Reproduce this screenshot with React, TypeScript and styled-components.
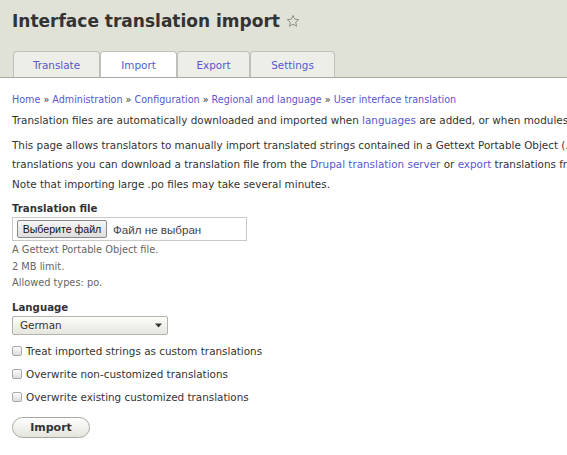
import styled, { createGlobalStyle } from 'styled-components';

const GlobalStyle = createGlobalStyle`
  html, body {
    margin: 0;
    padding: 0;
    background: #fff;
    overflow: hidden;
  }
  body {
    font-family: "DejaVu Sans", Verdana, sans-serif;
    font-size: 10.4px;
    color: #333;
  }
`;

const Page = styled.div`
  width: 100%;
  min-height: 100vh;
  overflow: hidden;
`;

const Header = styled.header`
  background-color: #e0e1d7;
  border-bottom: 1px solid #a8a9a3;
  padding: 11px 0 0 12px;
  height: 66px;
  display: flex;
  flex-direction: column;
`;

const Title = styled.h1`
  display: flex;
  align-items: center;
  gap: 6px;
  margin: 0;
  height: 20px;
  font-size: 17px;
  font-weight: bold;
  color: #333;
`;

const TabList = styled.nav`
  display: flex;
  margin-top: auto;
  padding-left: 1px;
`;

const Tab = styled.a<{ $active?: boolean; $width: number }>`
  display: flex;
  align-items: center;
  justify-content: center;
  box-sizing: border-box;
  width: ${(p) => p.$width}px;
  height: 26px;
  padding-top: 1px;
  border: 1px solid #bfc0ba;
  border-bottom: none;
  border-radius: 4px 4px 0 0;
  background-color: ${(p) => (p.$active ? '#fff' : '#eeeee8')};
  color: #5757cf;
  font-size: 10.4px;
  text-decoration: none;
`;

const Content = styled.main`
  padding: 12px 12px 0 12px;
`;

const Link = styled.a`
  color: #5757cf;
  text-decoration: none;
`;

const Breadcrumb = styled.div`
  font-size: 9.6px;
  line-height: 19px;
  margin-bottom: 2px;
  white-space: nowrap;
`;

const Paragraph = styled.p<{ $gap: number }>`
  margin: 0 0 ${(p) => p.$gap}px 0;
  line-height: 19px;
  white-space: nowrap;
`;

const FormItem = styled.div<{ $gap: number }>`
  margin-bottom: ${(p) => p.$gap}px;
`;

const Label = styled.label`
  display: block;
  font-size: 10.2px;
  font-weight: bold;
  line-height: 14px;
  margin-bottom: 1px;
`;

const FileField = styled.div`
  display: flex;
  align-items: center;
  gap: 6px;
  box-sizing: border-box;
  width: 235px;
  height: 24px;
  margin-bottom: 1px;
  padding: 0 4px;
  border: 1px solid #c8c8c8;
  background: #fff;
  font-family: "Liberation Sans", Arial, sans-serif;
  font-size: 11.6px;
  color: #444;
`;

const FileButton = styled.button`
  box-sizing: border-box;
  height: 18px;
  width: 90px;
  padding: 0;
  border: 1px solid #8a8a8a;
  border-radius: 2px;
  background: linear-gradient(#f6f6f6, #dedede);
  font-family: "Liberation Sans", Arial, sans-serif;
  font-size: 10.6px;
  color: #111;
`;

const Description = styled.div`
  color: #666;
  font-size: 9.8px;
  line-height: 16.5px;
`;

const SelectBox = styled.div`
  display: flex;
  align-items: center;
  justify-content: space-between;
  box-sizing: border-box;
  width: 156px;
  height: 19px;
  padding: 0 5px 0 7px;
  border: 1px solid #b4b4ac;
  border-radius: 2px;
  background: linear-gradient(#fdfdfb, #e6e6df);
  color: #333;
`;

const CheckRow = styled.label`
  display: flex;
  align-items: center;
  gap: 4px;
  height: 23px;
`;

const Checkbox = styled.input`
  appearance: none;
  box-sizing: border-box;
  width: 10px;
  height: 10px;
  margin: 0;
  border: 1px solid #a9a9a9;
  border-radius: 2px;
  background: linear-gradient(#fbfbfb, #dcdcdc);
`;

const ImportButton = styled.button`
  box-sizing: border-box;
  width: 78px;
  height: 21px;
  margin-top: 8px;
  padding: 0;
  border: 1px solid #a8a8a2;
  border-radius: 11px;
  background: linear-gradient(#ffffff, #e4e4dc);
  font-family: "DejaVu Sans", Verdana, sans-serif;
  font-size: 11px;
  font-weight: bold;
  color: #333;
`;

const Star = () => (
  <svg width="14" height="14" viewBox="0 0 24 24" fill="none" stroke="#8a8a84" strokeWidth="1.6" strokeLinejoin="round">
    <polygon points="12,2.5 14.9,8.9 21.8,9.6 16.6,14.2 18.1,21 12,17.5 5.9,21 7.4,14.2 2.2,9.6 9.1,8.9" />
  </svg>
);

const Caret = () => (
  <svg width="7" height="5" viewBox="0 0 7 5">
    <polygon points="0,0.5 7,0.5 3.5,4.5" fill="#333" />
  </svg>
);

const App = () => {
  return (
    <Page>
      <GlobalStyle />
      <Header>
        <Title>
          Interface translation import <Star />
        </Title>
        <TabList>
          <Tab href="#" $width={87}>Translate</Tab>
          <Tab href="#" $width={77} $active>Import</Tab>
          <Tab href="#" $width={73}>Export</Tab>
          <Tab href="#" $width={85}>Settings</Tab>
        </TabList>
      </Header>
      <Content>
        <Breadcrumb>
          <Link href="#">Home</Link> » <Link href="#">Administration</Link> » <Link href="#">Configuration</Link> »{' '}
          <Link href="#">Regional and language</Link> » <Link href="#">User interface translation</Link>
        </Breadcrumb>
        <Paragraph $gap={6}>
          Translation files are automatically downloaded and imported when <Link href="#">languages</Link> are added, or when modules or themes are enabled.
        </Paragraph>
        <Paragraph $gap={1}>
          This page allows translators to manually import translated strings contained in a Gettext Portable Object (.po) file. Manual import may be used for customized translations or for the translation of custom modules and themes. To customize
          <br />
          translations you can download a translation file from the <Link href="#">Drupal translation server</Link> or <Link href="#">export</Link> translations from the site, customize the translations using a Gettext Portable Object editor, and import the result using this page.
        </Paragraph>
        <Paragraph $gap={8}>Note that importing large .po files may take several minutes.</Paragraph>

        <FormItem $gap={9}>
          <Label>Translation file</Label>
          <FileField>
            <FileButton type="button">Выберите файл</FileButton>
            <span>Файл не выбран</span>
          </FileField>
          <Description>A Gettext Portable Object file.</Description>
          <Description>2 MB limit.</Description>
          <Description>Allowed types: po.</Description>
        </FormItem>

        <FormItem $gap={5}>
          <Label>Language</Label>
          <SelectBox>
            <span>German</span>
            <Caret />
          </SelectBox>
        </FormItem>

        <CheckRow>
          <Checkbox type="checkbox" />
          Treat imported strings as custom translations
        </CheckRow>
        <CheckRow>
          <Checkbox type="checkbox" />
          Overwrite non-customized translations
        </CheckRow>
        <CheckRow>
          <Checkbox type="checkbox" />
          Overwrite existing customized translations
        </CheckRow>

        <ImportButton type="button">Import</ImportButton>
      </Content>
    </Page>
  );
};

export default App;
